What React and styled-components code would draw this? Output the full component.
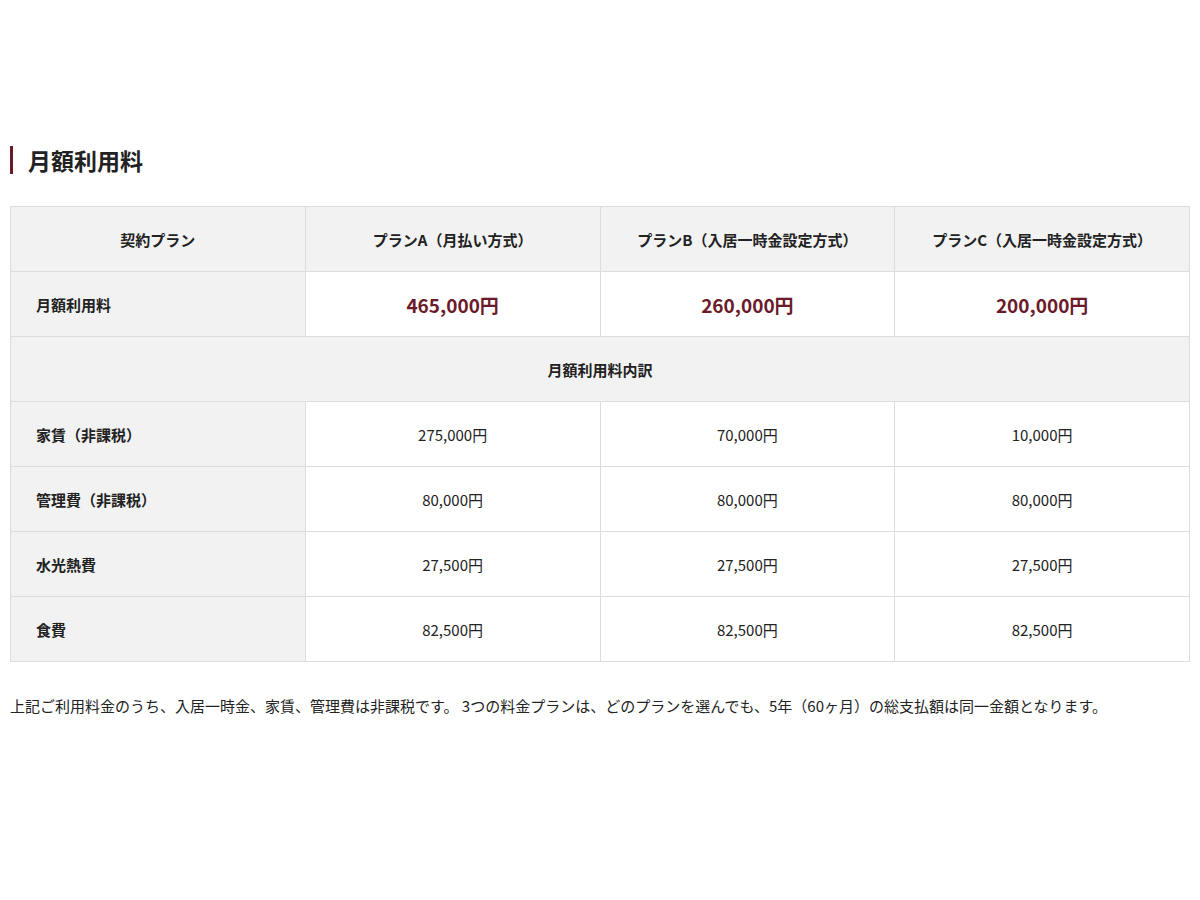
import React from 'react'
import styled, { createGlobalStyle } from 'styled-components'

const GlobalStyle = createGlobalStyle`
    body {
        margin: 0;
        background: #fff;
        font-family: "Noto Sans CJK JP", "Noto Sans", sans-serif;
        color: #222;
    }
`

const Page = styled.div`
    padding: 146px 10px 0 10px;
`

const Heading = styled.h2`
    margin: 0 0 32px 0;
    padding-left: 15px;
    border-left: 3px solid #6b1a2a;
    font-size: 23px;
    font-weight: 700;
    line-height: 28px;
`

const Table = styled.table`
    width: 100%;
    border-collapse: collapse;
    table-layout: fixed;
`

const Cell = styled.td`
    height: 64px;
    border: 1px solid #dcdcdc;
    background: ${ ( { $head } ) => $head ? '#f2f2f2' : '#fff' };
    text-align: ${ ( { $left } ) => $left ? 'left' : 'center' };
    padding: 0 0 0 ${ ( { $left } ) => $left ? '25px' : '0' };
    font-size: 15px;
    font-weight: ${ ( { $bold } ) => $bold ? 700 : 400 };
`

const Price = styled.span`
    color: #6b1a2a;
    font-size: 19px;
    font-weight: 700;
`

const Note = styled.p`
    margin: 32px 0 0 0;
    font-size: 15px;
    line-height: 24px;
`

const rows = [
    [ '家賃（非課税）', '275,000円', '70,000円', '10,000円' ],
    [ '管理費（非課税）', '80,000円', '80,000円', '80,000円' ],
    [ '水光熱費', '27,500円', '27,500円', '27,500円' ],
    [ '食費', '82,500円', '82,500円', '82,500円' ],
]

export default function App() {
    return <>
        <GlobalStyle />
        <Page>
            <Heading>月額利用料</Heading>
            <Table>
                <tbody>
                    <tr>
                        <Cell $head $bold>契約プラン</Cell>
                        <Cell $head $bold>プランA（月払い方式）</Cell>
                        <Cell $head $bold>プランB（入居一時金設定方式）</Cell>
                        <Cell $head $bold>プランC（入居一時金設定方式）</Cell>
                    </tr>
                    <tr>
                        <Cell $head $bold $left>月額利用料</Cell>
                        <Cell><Price>465,000円</Price></Cell>
                        <Cell><Price>260,000円</Price></Cell>
                        <Cell><Price>200,000円</Price></Cell>
                    </tr>
                    <tr>
                        <Cell $head $bold colSpan={ 4 }>月額利用料内訳</Cell>
                    </tr>
                    { rows.map( ( r ) => <tr key={ r[0] }>
                        <Cell $head $bold $left>{ r[0] }</Cell>
                        <Cell>{ r[1] }</Cell>
                        <Cell>{ r[2] }</Cell>
                        <Cell>{ r[3] }</Cell>
                    </tr> ) }
                </tbody>
            </Table>
            <Note>上記ご利用料金のうち、入居一時金、家賃、管理費は非課税です。 3つの料金プランは、どのプランを選んでも、5年（60ヶ月）の総支払額は同一金額となります。</Note>
        </Page>
    </>
}
